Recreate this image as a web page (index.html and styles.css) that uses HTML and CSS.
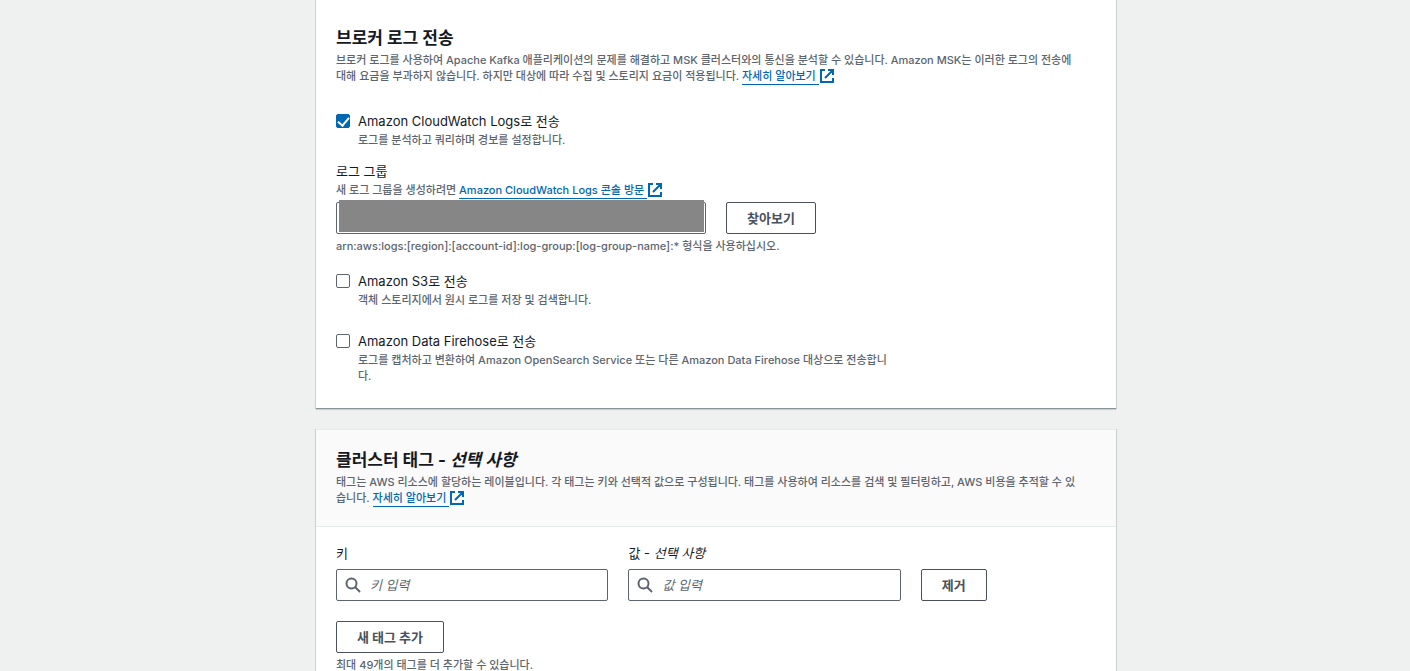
FILE: index.html
```html
<!DOCTYPE html>
<html lang="ko">
<head>
<meta charset="utf-8">
<title>MSK 클러스터 생성</title>
<link rel="stylesheet" href="styles.css">
</head>
<body>
<main class="page">
  <section class="card logs">
    <h2 class="title">브로커 로그 전송</h2>
    <p class="desc">브로커 로그를 사용하여 Apache Kafka 애플리케이션의 문제를 해결하고 MSK 클러스터와의 통신을 분석할 수 있습니다. Amazon MSK는 이러한 로그의 전송에<br>대해 요금을 부과하지 않습니다. 하지만 대상에 따라 수집 및 스토리지 요금이 적용됩니다. <a class="link" href="#"><span class="link-text">자세히 알아보기 </span><svg class="ext" viewBox="0 0 14 14" aria-hidden="true"><path d="M5 1H1v12h12V9M8 1h5v5M13 1L5 9"/></svg></a></p>
    <div class="option first">
      <input class="check" type="checkbox" id="cw" checked>
      <div class="option-text"><label class="label" for="cw">Amazon CloudWatch Logs로 전송</label><p class="desc">로그를 분석하고 쿼리하며 경보를 설정합니다.</p></div>
    </div>
    <div class="group">
      <label class="label" for="lg">로그 그룹</label>
      <p class="desc">새 로그 그룹을 생성하려면 <a class="link" href="#"><span class="link-text">Amazon CloudWatch Logs 콘솔 방문 </span><svg class="ext" viewBox="0 0 14 14" aria-hidden="true"><path d="M5 1H1v12h12V9M8 1h5v5M13 1L5 9"/></svg></a></p>
      <div class="row">
        <div class="masked"><input class="field" id="lg" type="text"><span class="mask"></span></div>
        <div><button class="btn" type="button">찾아보기</button></div>
      </div>
      <p class="desc hint">arn:aws:logs:[region]:[account-id]:log-group:[log-group-name]:* 형식을 사용하십시오.</p>
    </div>
    <div class="option">
      <input class="check" type="checkbox" id="s3">
      <div class="option-text"><label class="label" for="s3">Amazon S3로 전송</label><p class="desc">객체 스토리지에서 원시 로그를 저장 및 검색합니다.</p></div>
    </div>
    <div class="option">
      <input class="check" type="checkbox" id="fh">
      <div class="option-text"><label class="label" for="fh">Amazon Data Firehose로 전송</label><p class="desc">로그를 캡처하고 변환하여 Amazon OpenSearch Service 또는 다른 Amazon Data Firehose 대상으로 전송합니<br>다.</p></div>
    </div>
  </section>
  <section class="card">
    <header class="head">
      <h2 class="title">클러스터 태그 - <i>선택 사항</i></h2>
      <p class="desc">태그는 AWS 리소스에 할당하는 레이블입니다. 각 태그는 키와 선택적 값으로 구성됩니다. 태그를 사용하여 리소스를 검색 및 필터링하고, AWS 비용을 추적할 수 있<br>습니다. <a class="link" href="#"><span class="link-text">자세히 알아보기 </span><svg class="ext" viewBox="0 0 14 14" aria-hidden="true"><path d="M5 1H1v12h12V9M8 1h5v5M13 1L5 9"/></svg></a></p>
    </header>
    <div class="body">
      <div class="tags">
        <div><label class="label" for="k">키</label><div class="field search"><svg class="glass" viewBox="0 0 16 16" aria-hidden="true"><circle cx="6.500" cy="6.500" r="5"/><path d="M10 10l5 5"/></svg><input class="search-input" id="k" type="text" placeholder="키 입력"></div></div>
        <div><label class="label" for="v">값 - <i>선택 사항</i></label><div class="field search"><svg class="glass" viewBox="0 0 16 16" aria-hidden="true"><circle cx="6.500" cy="6.500" r="5"/><path d="M10 10l5 5"/></svg><input class="search-input" id="v" type="text" placeholder="값 입력"></div></div>
        <div><button class="btn" type="button">제거</button></div>
      </div>
      <button class="btn" type="button">새 태그 추가</button>
      <p class="desc hint">최대 49개의 태그를 더 추가할 수 있습니다.</p>
    </div>
  </section>
</main>
</body>
</html>
```
FILE: styles.css
```css
* { box-sizing: border-box; }
body {
  margin: 0;
  padding-left: 22px;
  background: #eff1f1;
  color: #16191f;
  font: 13px/20px Inter, "Noto Sans CJK KR", sans-serif;
}
.page { max-width: 800px; margin: 0 auto; }
.card {
  margin-bottom: 20px;
  background: #fff;
  border-top: 1px solid #e6eaea;
  border-bottom: 1px solid #879596;
  box-shadow: 0 1px 1px #ccd1d2, 1px 0 0 #c9cecf, -1px 0 0 #c9cecf;
}
.logs { padding: 27px 20px 24px; border-top: 0; }
.title { margin: 0 0 3px; font-size: 17px; line-height: 22px; font-weight: 700; }
.desc { margin: 0; font-size: 11px; line-height: 16px; font-weight: 500; color: #5c656f; }
.label { display: block; margin-bottom: 1px; }
.link { color: #0067b3; text-decoration: none; }
.link-text { padding-bottom: 1px; border-bottom: 1px solid #0067b3; white-space: pre-wrap; }
.ext {
  width: 14px;
  height: 14px;
  margin-left: 1px;
  vertical-align: -3px;
  fill: none;
  stroke: #0067b3;
  stroke-width: 2;
}
.option { display: flex; gap: 8px; margin-top: 23px; }
.option.first { margin-top: 27px; }
.check {
  appearance: none;
  flex: none;
  width: 14px;
  height: 14px;
  margin: 3px 0 0;
  border: 1px solid #5c656f;
  border-radius: 2px;
  background: #fff;
}
.check:checked {
  display: grid;
  place-content: start center;
  border-color: #0067b3;
  background: #0067b3;
}
.check:checked::before {
  content: "";
  width: 5px;
  height: 9px;
  border: solid #fff;
  border-width: 0 2px 2px 0;
  transform: rotate(40deg);
}
.group { margin: 13px 0 17px; }
.group + .option { margin-top: 0; }
.row { display: grid; grid-template-columns: 1fr 1fr; gap: 20px; margin-top: 4px; }
.masked { position: relative; }
.mask { position: absolute; top: -2px; left: 3px; right: 2px; height: 32px; background: #868686; }
.field {
  display: block;
  width: 100%;
  height: 32px;
  border: 1px solid #5c656f;
  border-radius: 2px;
  background: #fff;
  font: inherit;
}
.hint { margin-top: 4px; }
.btn {
  display: block;
  height: 32px;
  padding: 0 20px;
  background: #fff;
  border: 1px solid #4a515b;
  border-radius: 2px;
  font: inherit;
  font-weight: 700;
  color: #4a515b;
}
.head { padding: 19px 20px 20px; background: #fafafa; border-bottom: 1px solid #e6eaea; }
.body { padding: 16px 20px 0; }
.tags {
  display: grid;
  grid-template-columns: 14fr 14fr 9fr;
  align-items: end;
  gap: 20px;
  margin-bottom: 20px;
}
.search { display: flex; align-items: center; gap: 9px; margin-top: 6px; padding: 0 8px; }
.glass { flex: none; width: 16px; height: 16px; fill: none; stroke: #5c656f; stroke-width: 2; }
.search-input {
  flex: 1;
  min-width: 0;
  padding: 0;
  border: 0;
  background: none;
  outline: none;
  font: inherit;
}
.search-input::placeholder { color: #5c656f; font-style: italic; opacity: 1; }
```
